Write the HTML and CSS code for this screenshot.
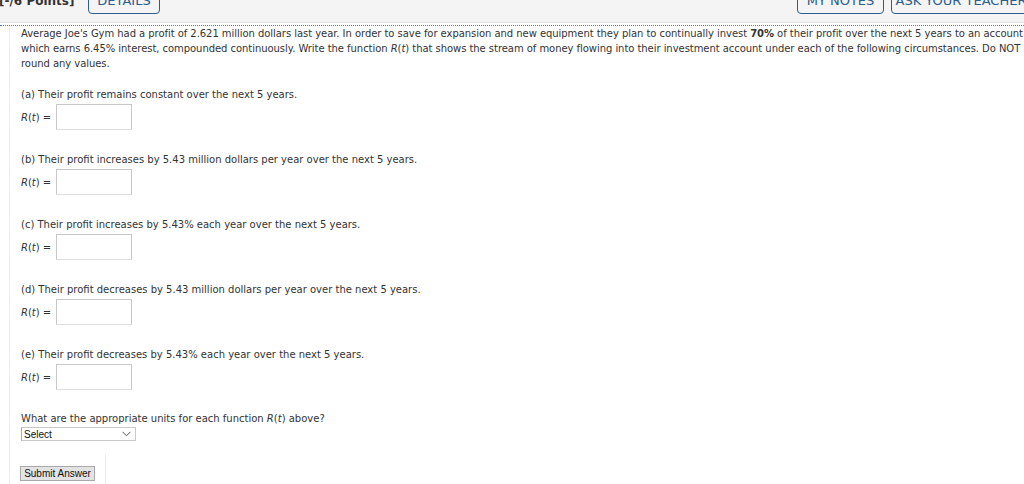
FILE: index.html
```html
<!DOCTYPE html>
<html>
<head>
<meta charset="utf-8">
<link rel="stylesheet" href="styles.css">
</head>
<body>
<div class="topbar">
  <div class="topbar-inner">
    <span class="points">[-/6 Points]</span>
    <span class="btn btn-details">DETAILS</span>
    <span class="spacer"></span>
    <span class="btn btn-notes">MY NOTES</span>
    <span class="btn btn-ask">ASK YOUR TEACHER</span>
  </div>
</div>
<div class="dotline"></div>
<div class="question">
  <p class="intro">Average Joe's Gym had a profit of 2.621 million dollars last year. In order to save for expansion and new equipment they plan to continually invest <b>70%</b> of their profit over the next 5 years to an account which earns 6.45% interest, compounded continuously. Write the function <i>R</i>(<i>t</i>) that shows the stream of money flowing into their investment account under each of the following circumstances. Do NOT round any values.</p>

  <div class="part">
    <p class="prompt">(a) Their profit remains constant over the next 5 years.</p>
    <div class="answer"><span class="label"><i>R</i>(<i>t</i>) =</span><span class="box"></span></div>
  </div>
  <div class="part">
    <p class="prompt">(b) Their profit increases by 5.43 million dollars per year over the next 5 years.</p>
    <div class="answer"><span class="label"><i>R</i>(<i>t</i>) =</span><span class="box"></span></div>
  </div>
  <div class="part">
    <p class="prompt">(c) Their profit increases by 5.43% each year over the next 5 years.</p>
    <div class="answer"><span class="label"><i>R</i>(<i>t</i>) =</span><span class="box"></span></div>
  </div>
  <div class="part">
    <p class="prompt">(d) Their profit decreases by 5.43 million dollars per year over the next 5 years.</p>
    <div class="answer"><span class="label"><i>R</i>(<i>t</i>) =</span><span class="box"></span></div>
  </div>
  <div class="part">
    <p class="prompt">(e) Their profit decreases by 5.43% each year over the next 5 years.</p>
    <div class="answer"><span class="label"><i>R</i>(<i>t</i>) =</span><span class="box"></span></div>
  </div>

  <div class="units">
    <p class="prompt">What are the appropriate units for each function <i>R</i>(<i>t</i>) above?</p>
    <div class="select"><span>Select</span><svg width="9" height="6" viewBox="0 0 9 6"><path d="M0.5 0.8 L4.5 4.8 L8.5 0.8" fill="none" stroke="#555" stroke-width="1"/></svg></div>
  </div>

  <div class="submit-row">
    <span class="submit">Submit Answer</span>
    <span class="divider"></span>
  </div>
</div>
</body>
</html>
```
FILE: styles.css
```css
html, body {
  margin: 0;
  padding: 0;
  background: #ffffff;
}
body {
  font-family: "DejaVu Sans", Verdana, sans-serif;
  color: #333333;
  overflow: hidden;
  height: 484px;
}
.topbar {
  height: 22px;
  background: #f4f4f4;
  border-bottom: 1px solid #e2e2e2;
  overflow: hidden;
}
.topbar-inner {
  display: flex;
  align-items: flex-end;
  height: 14px;
}
.points {
  width: 74px;
  flex: none;
  white-space: nowrap;
  font-family: "DejaVu Sans", sans-serif;
  font-weight: bold;
  font-size: 12px;
  color: #333;
  line-height: 14px;
  margin-bottom: 6px;
  margin-left: -1px;
}
.btn {
  box-sizing: border-box;
  height: 30px;
  border: 1px solid #2c5d8c;
  border-radius: 0 0 4px 4px;
  color: #2c5d8c;
  font-size: 13px;
  font-family: "DejaVu Sans", sans-serif;
  display: flex;
  align-items: flex-end;
  justify-content: center;
  padding-bottom: 5px;
  line-height: 14px;
  white-space: nowrap;
  flex: none;
}
.btn-details {
  width: 72px;
  margin-left: 15px;
}
.spacer { flex: 1; }
.btn-notes {
  width: 87px;
}
.btn-ask {
  width: 140px;
  margin-left: 7px;
  margin-right: -7px;
}
.dotline {
  height: 0;
  margin-top: 2px;
  border-top: 1px dotted #3b7fd9;
}
.question {
  margin-left: 9px;
  border-left: 1px solid #eeeeee;
  padding-left: 11px;
  padding-top: 0;
  height: 470px;
  font-size: 10px;
}
.intro {
  margin: 0;
  line-height: 15px;
  letter-spacing: -0.05px;
}
.part {
  margin-top: 16px;
}
.part + .part {
  margin-top: 22px;
}
.prompt {
  margin: 0;
  line-height: 15px;
}
.answer {
  display: flex;
  align-items: center;
  margin-top: 2px;
}
.label {
  width: 35px;
  flex: none;
}
.box {
  display: block;
  width: 74px;
  height: 24px;
  border: 1px solid #c8c8c8;
  border-bottom-color: #dedede;
  background: #fff;
}
.units {
  margin-top: 21px;
}
.select {
  box-sizing: border-box;
  width: 115px;
  height: 14px;
  margin-top: 1px;
  border: 1px solid #c9c9c9;
  border-left-color: #aaa;
  display: flex;
  align-items: center;
  justify-content: space-between;
  padding: 0 4px 0 2px;
  font-family: "Liberation Sans", Arial, sans-serif;
  font-size: 10px;
  color: #111;
}
.submit-row {
  display: flex;
  align-items: flex-end;
  margin-top: 0;
  height: 44px;
}
.submit {
  box-sizing: border-box;
  height: 15px;
  width: 75px;
  display: flex;
  align-items: center;
  justify-content: center;
  background: #e3e3e3;
  border: 1px solid #a9a9a9;
  font-family: "Liberation Sans", Arial, sans-serif;
  font-size: 10px;
  color: #111;
  margin-bottom: 4px;
  margin-left: -1px;
}
.divider {
  width: 1px;
  height: 32px;
  background: #eeeeee;
  margin-left: 10px;
  margin-bottom: -1px;
}
```
